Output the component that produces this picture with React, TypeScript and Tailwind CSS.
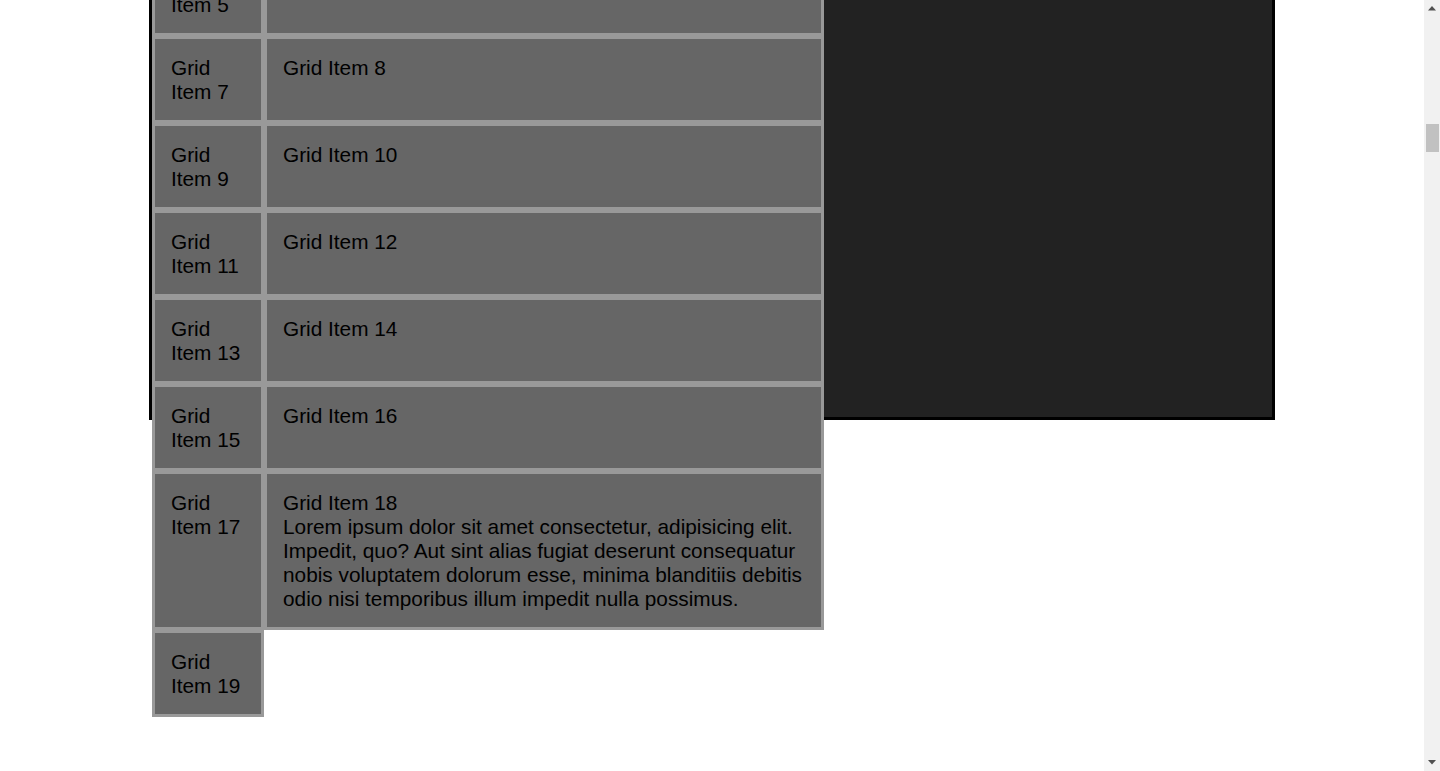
import React from 'react';

const LOREM =
  'Lorem ipsum dolor sit amet consectetur, adipisicing elit. Impedit, quo? Aut sint alias fugiat deserunt consequatur nobis voluptatem dolorum esse, minima blanditiis debitis odio nisi temporibus illum impedit nulla possimus.';

function GridItem({ n, children }: { n: number; children?: React.ReactNode }) {
  return (
    <div className="border-[3px] border-[#999999] bg-[#666666] px-4 pt-[17px] pb-4 text-[20.8px] leading-6 text-black">
      Grid Item {n}
      {children}
    </div>
  );
}

function Scrollbar() {
  return (
    <div className="flex h-full w-4 shrink-0 flex-col bg-[#f1f1f1]">
      <div className="flex h-[17px] items-center justify-center">
        <svg width="8" height="5" viewBox="0 0 8 5">
          <path d="M4 0L8 4.5H0Z" fill="#505050" />
        </svg>
      </div>
      <div className="flex-1 pt-[107px]">
        <div className="ml-[2px] mr-px h-[28px] bg-[#c1c1c1]" />
      </div>
      <div className="flex h-[17px] items-center justify-center">
        <svg width="8" height="5" viewBox="0 0 8 5">
          <path d="M4 4.5L8 0H0Z" fill="#505050" />
        </svg>
      </div>
    </div>
  );
}

export default function App() {
  const items = Array.from({ length: 19 }, (_, i) => i + 1);

  return (
    <div className="flex h-screen overflow-hidden bg-white font-['Liberation_Sans',Arial,sans-serif]">
      {/* viewport content, captured scrolled part-way down the page */}
      <div className="flex-1 overflow-hidden">
        <div className="mx-auto -mt-[228px] h-[648px] w-[1126px] border-[3px] border-black bg-[#222222]">
          <div className="grid w-[60%] grid-cols-[1fr_5fr]">
            {items.map(n => (
              <GridItem key={n} n={n}>
                {n === 18 && <div>{LOREM}</div>}
              </GridItem>
            ))}
          </div>
        </div>
      </div>
      <Scrollbar />
    </div>
  );
}
